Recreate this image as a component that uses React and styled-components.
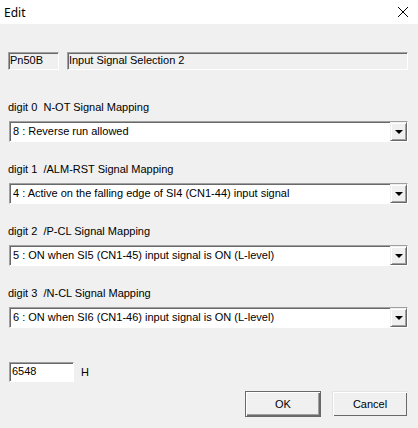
import React from "react";
import styled, { createGlobalStyle } from "styled-components";

const mappings = [
  { label: "digit 0  N-OT Signal Mapping", value: "8 : Reverse run allowed" },
  { label: "digit 1  /ALM-RST Signal Mapping", value: "4 : Active on the falling edge of SI4 (CN1-44) input signal" },
  { label: "digit 2  /P-CL Signal Mapping", value: "5 : ON when SI5 (CN1-45) input signal is ON (L-level)" },
  { label: "digit 3  /N-CL Signal Mapping", value: "6 : ON when SI6 (CN1-46) input signal is ON (L-level)" },
];

const App = () => {
  return (
    <>
      <GlobalStyle />
      <Dialog>
        <TitleBar>
          <Title>Edit</Title>
          <CloseIcon width="12" height="12" viewBox="0 0 12 12">
            <path d="M1 1 L11 11 M11 1 L1 11" stroke="#000" strokeWidth="1" fill="none" />
          </CloseIcon>
        </TitleBar>
        <Body>
          <HeaderRow>
            <ReadOnlyBox width="51px">Pn50B</ReadOnlyBox>
            <ReadOnlyBox width="342px">Input Signal Selection 2</ReadOnlyBox>
          </HeaderRow>
          <Groups>
            {mappings.map((m) => (
              <Group key={m.label}>
                <Label>{m.label}</Label>
                <Combo>
                  <ComboText>{m.value}</ComboText>
                  <ComboButton>
                    <Arrow />
                  </ComboButton>
                </Combo>
              </Group>
            ))}
          </Groups>
          <ValueRow>
            <ValueInput>6548</ValueInput>
            <Unit>H</Unit>
          </ValueRow>
          <ButtonRow>
            <Button $default>OK</Button>
            <Button>Cancel</Button>
          </ButtonRow>
        </Body>
      </Dialog>
    </>
  );
};

// Styled Components

const GlobalStyle = createGlobalStyle`
  html, body {
    margin: 0;
    padding: 0;
    background: #f0f0f0;
  }
  body {
    font-family: "Liberation Sans", Arial, sans-serif;
    font-size: 11px;
    color: #000;
  }
`;

const Dialog = styled.div`
  width: 418px;
  height: 428px;
  background: #f0f0f0;
  display: flex;
  flex-direction: column;
`;

const TitleBar = styled.div`
  height: 24px;
  background: #ffffff;
  display: flex;
  align-items: center;
  justify-content: space-between;
  padding: 0 9px 0 4px;
`;

const Title = styled.span`
  font-family: "Noto Sans", "Open Sans", sans-serif;
  font-size: 12px;
  color: #000;
`;

const CloseIcon = styled.svg`
  display: block;
`;

const Body = styled.div`
  display: flex;
  flex-direction: column;
  padding: 28px 10px 0 8px;
`;

const HeaderRow = styled.div`
  display: flex;
  gap: 8px;
`;

const ReadOnlyBox = styled.div`
  box-sizing: border-box;
  width: ${(p) => p.width};
  height: 18px;
  line-height: 15px;
  padding-left: 1px;
  background: #f0f0f0;
  border-top: 1px solid #a0a0a0;
  border-left: 1px solid #a0a0a0;
  border-right: 1px solid #ffffff;
  border-bottom: 1px solid #ffffff;
  box-shadow: inset 1px 1px 0 #696969;
  white-space: nowrap;
`;

const Groups = styled.div`
  display: flex;
  flex-direction: column;
  gap: 21px;
  margin-top: 31px;
`;

const Group = styled.div`
  display: flex;
  flex-direction: column;
  gap: 7px;
`;

const Label = styled.div`
  height: 13px;
  line-height: 13px;
  white-space: pre;
`;

const Combo = styled.div`
  box-sizing: border-box;
  margin-left: 1px;
  height: 21px;
  display: flex;
  align-items: stretch;
  background: #ffffff;
  border-top: 1px solid #a0a0a0;
  border-left: 1px solid #a0a0a0;
  border-right: 1px solid #ffffff;
  border-bottom: 1px solid #ffffff;
  box-shadow: inset 1px 1px 0 #696969;
`;

const ComboText = styled.div`
  flex: 1;
  padding: 0 0 0 3px;
  line-height: 19px;
  white-space: nowrap;
  overflow: hidden;
`;

const ComboButton = styled.div`
  box-sizing: border-box;
  width: 17px;
  background: #f0f0f0;
  border-top: 1px solid #f0f0f0;
  border-left: 1px solid #f0f0f0;
  border-right: 1px solid #696969;
  border-bottom: 1px solid #696969;
  box-shadow: inset 1px 1px 0 #ffffff, inset -1px -1px 0 #a0a0a0;
  display: flex;
  align-items: center;
  justify-content: center;
`;

const Arrow = styled.div`
  width: 0;
  height: 0;
  border-left: 4px solid transparent;
  border-right: 4px solid transparent;
  border-top: 4px solid #000;
  margin-top: 1px;
`;

const ValueRow = styled.div`
  display: flex;
  align-items: center;
  gap: 7px;
  margin-top: 34px;
  margin-left: 1px;
`;

const ValueInput = styled.div`
  box-sizing: border-box;
  width: 65px;
  height: 20px;
  line-height: 17px;
  padding-left: 2px;
  background: #ffffff;
  border-top: 1px solid #a0a0a0;
  border-left: 1px solid #a0a0a0;
  border-right: 1px solid #ffffff;
  border-bottom: 1px solid #ffffff;
  box-shadow: inset 1px 1px 0 #696969;
`;

const Unit = styled.span`
  font-size: 11px;
`;

const ButtonRow = styled.div`
  display: flex;
  justify-content: flex-end;
  gap: 11px;
  margin-top: 9px;
`;

const Button = styled.div`
  box-sizing: border-box;
  width: 76px;
  height: 26px;
  display: flex;
  align-items: center;
  justify-content: center;
  background: #f0f0f0;
  font-size: 11px;
  border: 1px solid ${(p) => (p.$default ? "#696969" : "#f0f0f0")};
  box-shadow: inset 1px 1px 0 #ffffff, inset -1px -1px 0 #696969
    ${(p) => (p.$default ? ", inset -2px -2px 0 #a0a0a0" : "")};
  border-left-color: ${(p) => (p.$default ? "#696969" : "#e3e3e3")};
  border-top-color: ${(p) => (p.$default ? "#696969" : "#e3e3e3")};
  cursor: default;
`;

export default App;
